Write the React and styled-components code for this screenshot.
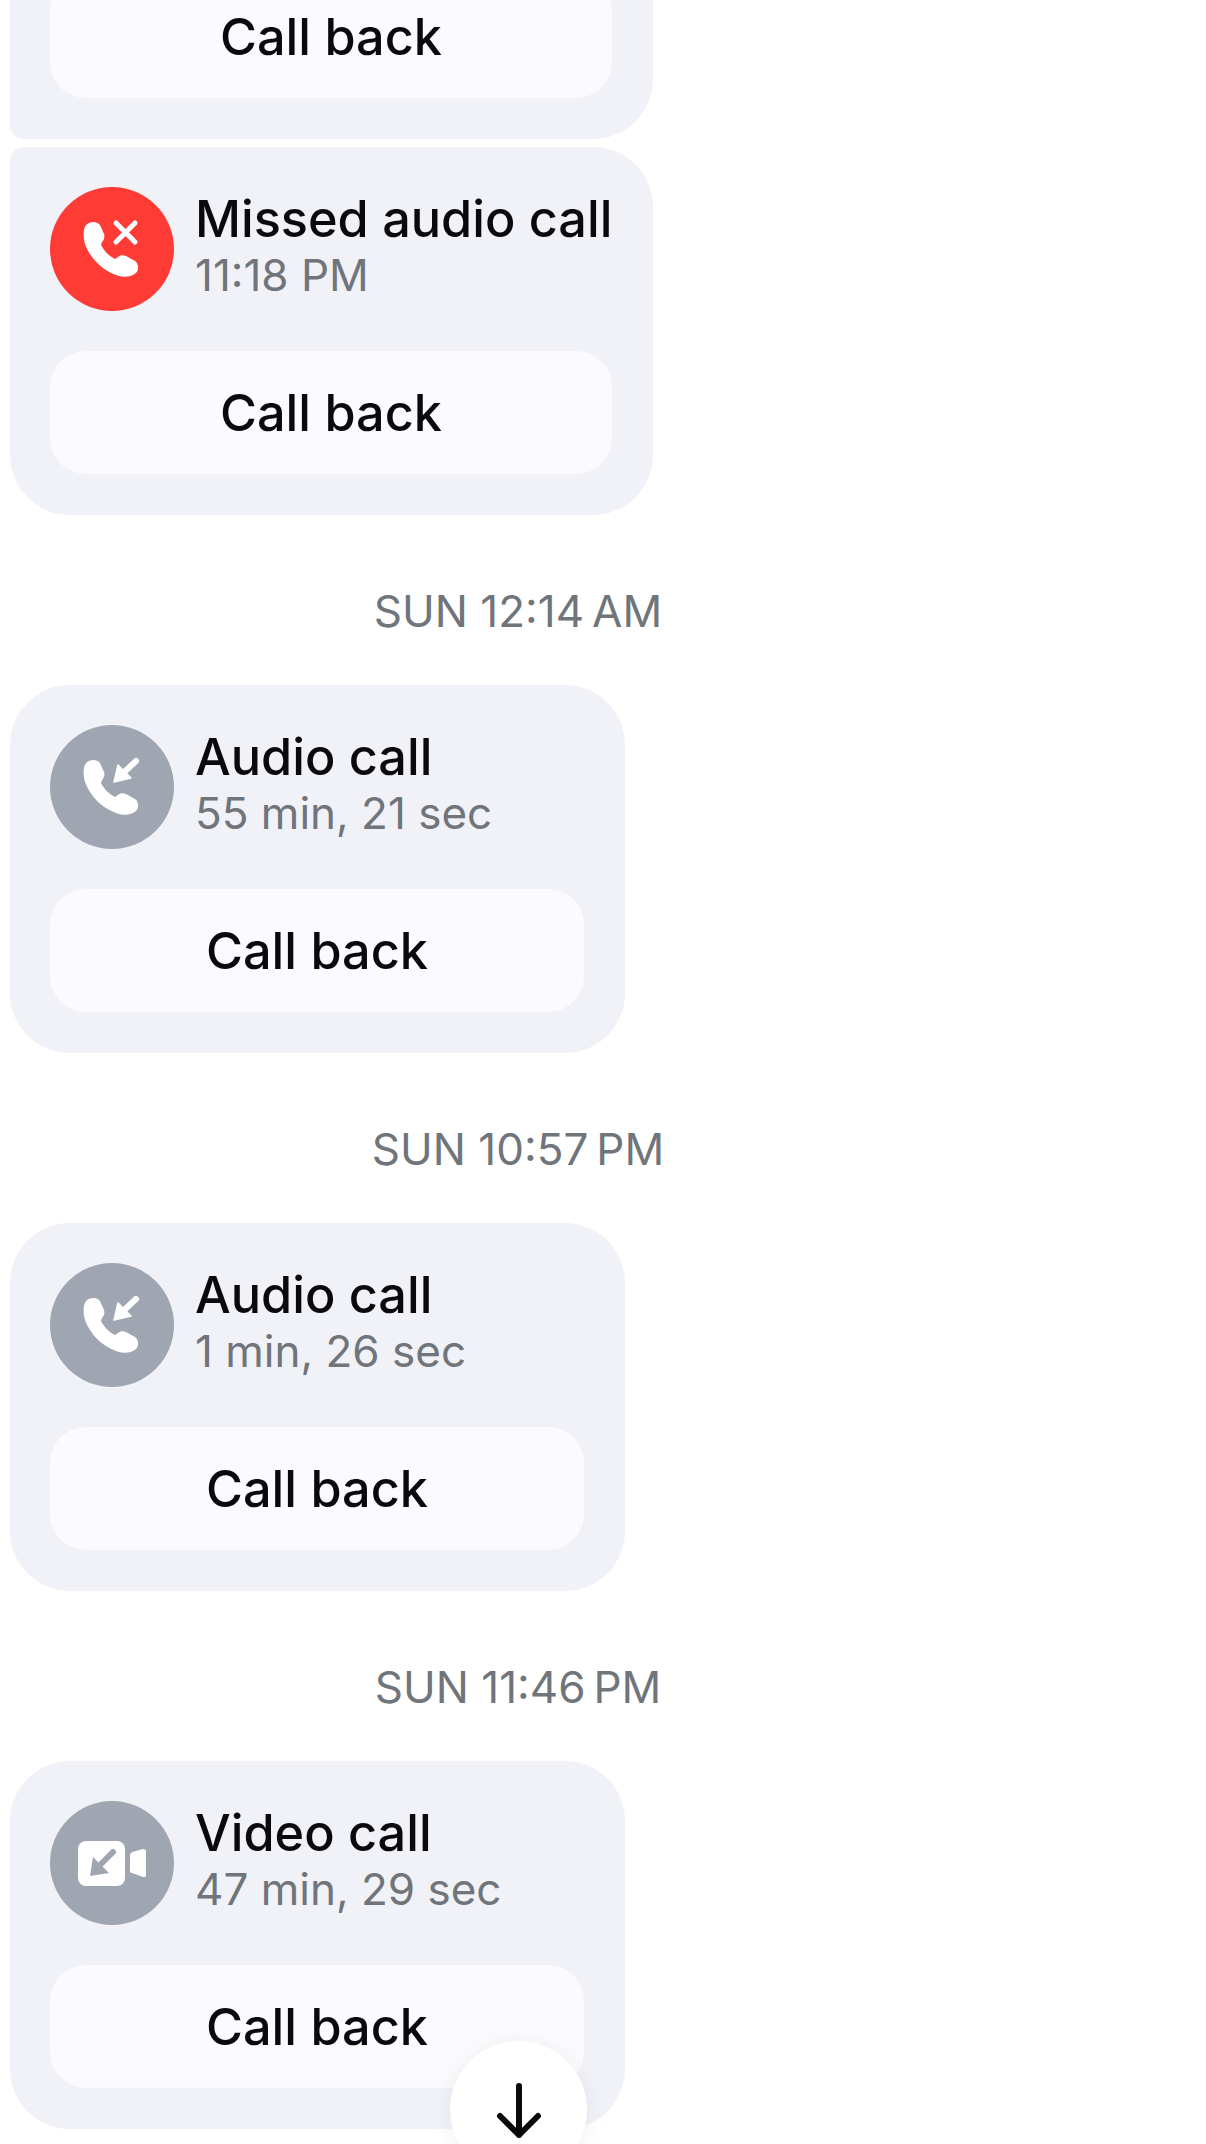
import React from "react";
import styled, { createGlobalStyle } from "styled-components";

const GlobalStyle = createGlobalStyle`
  html, body {
    margin: 0;
    padding: 0;
    background: #ffffff;
  }
  body {
    width: 1206px;
    height: 2144px;
    overflow: hidden;
    font-family: Inter, "Liberation Sans", sans-serif;
  }
`;

const Screen = styled.div`
  position: relative;
  width: 1206px;
  height: 2144px;
  overflow: hidden;
  background: #ffffff;
`;

/* the thread is scrolled, so the first bubble starts above the top edge */
const Thread = styled.div`
  display: flex;
  flex-direction: column;
  align-items: flex-start;
  padding-left: 10px;
  margin-top: -65px;
`;

const Bubble = styled.div`
  box-sizing: border-box;
  width: ${(props) => (props.$wide ? "643px" : "615px")};
  padding: 40px 41px 41px 40px;
  display: flex;
  flex-direction: column;
  gap: 40px;
  background: #f1f2f7;
  border-radius: ${(props) => props.$radius || "60px"};
  margin-top: ${(props) => (props.$joined ? "8px" : "0")};
`;

const Header = styled.div`
  display: flex;
  align-items: flex-start;
  gap: 21px;
`;

const Avatar = styled.div`
  flex: none;
  width: 124px;
  height: 124px;
  border-radius: 50%;
  background: ${(props) => (props.$missed ? "#ff3b36" : "#9fa5b1")};

  svg {
    display: block;
  }
`;

const Texts = styled.div`
  padding-top: 4px;
  white-space: nowrap;
`;

const Title = styled.div`
  font-size: 50.4px;
  line-height: 56px;
  font-weight: 550;
  color: #0a0a0c;
`;

const Subtitle = styled.div`
  font-size: 44px;
  line-height: 56px;
  font-weight: 400;
  color: #70747b;
`;

const CallBack = styled.div`
  height: 123px;
  border-radius: 36px;
  background: #fbfbfd;
  display: flex;
  align-items: center;
  justify-content: center;
  font-size: 50.4px;
  font-weight: 550;
  color: #0a0a0c;
`;

const DateLabel = styled.div`
  box-sizing: border-box;
  width: 1016px;
  height: 170px;
  padding-top: 21px;
  display: flex;
  align-items: center;
  justify-content: center;
  font-size: 44px;
  font-weight: 400;
  color: #70747b;
`;

const ScrollDown = styled.div`
  position: absolute;
  left: 450px;
  top: 2041px;
  width: 137px;
  height: 137px;
  border-radius: 50%;
  background: #ffffff;
  box-shadow: 0 2px 24px rgba(30, 35, 60, 0.06);
  display: flex;
  justify-content: center;
  padding-top: 42px;
  box-sizing: border-box;
`;

const Handset = () => (
  <path
    fill="#ffffff"
    d="M36 38C40 34 47 34 50 38L54 47C55 50 54 53 52 55L51 58C54 64 59 69 65 72L68 70C70 68 73 68 76 69L85 74C89 77 89 83 86 86C82 90 73 91 66 88C52 83 40 71 35 57C33 50 33 42 36 38Z"
  />
);

const MissedIcon = () => (
  <svg width="124" height="124" viewBox="0 0 124 124">
    <Handset />
    <path
      d="M66 36L85 55M85 36L66 55"
      stroke="#ffffff"
      strokeWidth="5"
      strokeLinecap="round"
      fill="none"
    />
  </svg>
);

const IncomingIcon = () => (
  <svg width="124" height="124" viewBox="0 0 124 124">
    <Handset />
    <path
      d="M70 51L86 36"
      stroke="#ffffff"
      strokeWidth="6"
      strokeLinecap="round"
      fill="none"
    />
    <path
      fill="#ffffff"
      stroke="#ffffff"
      strokeWidth="1.5"
      strokeLinejoin="round"
      d="M64 57L68 40L81 53Z"
    />
  </svg>
);

const VideoIcon = () => (
  <svg width="124" height="124" viewBox="0 0 124 124">
    <rect x="28" y="40" width="47" height="45" rx="8" fill="#ffffff" />
    <path
      fill="#ffffff"
      d="M80 54C80 53 81 52 82 51L93 48C95 48 96 49 96 50V74C96 76 95 76 93 76L82 72C81 72 80 71 80 70Z"
    />
    <path
      d="M47 67L63 51"
      stroke="#9fa5b1"
      strokeWidth="6"
      strokeLinecap="round"
      fill="none"
    />
    <path fill="#9fa5b1" d="M40 75L43 56L59 72Z" />
  </svg>
);

const calls = [
  {
    label: "SUN 12:14\u202fAM",
    title: "Audio call",
    detail: "55 min, 21 sec",
    icon: <IncomingIcon />,
  },
  {
    label: "SUN 10:57\u202fPM",
    title: "Audio call",
    detail: "1 min, 26 sec",
    icon: <IncomingIcon />,
  },
  {
    label: "SUN 11:46\u202fPM",
    title: "Video call",
    detail: "47 min, 29 sec",
    icon: <VideoIcon />,
  },
];

function App() {
  return (
    <Screen>
      <GlobalStyle />
      <Thread>
        <Bubble $wide $radius="60px 60px 60px 14px">
          <CallBack>Call back</CallBack>
        </Bubble>
        <Bubble $wide $joined $radius="14px 60px 60px 60px">
          <Header>
            <Avatar $missed>
              <MissedIcon />
            </Avatar>
            <Texts>
              <Title>Missed audio call</Title>
              <Subtitle>11:18 PM</Subtitle>
            </Texts>
          </Header>
          <CallBack>Call back</CallBack>
        </Bubble>

        {calls.map((call) => (
          <React.Fragment key={call.label}>
            <DateLabel>{call.label}</DateLabel>
            <Bubble>
              <Header>
                <Avatar>{call.icon}</Avatar>
                <Texts>
                  <Title>{call.title}</Title>
                  <Subtitle>{call.detail}</Subtitle>
                </Texts>
              </Header>
              <CallBack>Call back</CallBack>
            </Bubble>
          </React.Fragment>
        ))}
      </Thread>

      <ScrollDown>
        <svg width="46" height="56" viewBox="0 0 46 56">
          <path
            d="M23 3V52M4 33L23 52L42 33"
            stroke="#0a0a0c"
            strokeWidth="6"
            strokeLinecap="round"
            strokeLinejoin="round"
            fill="none"
          />
        </svg>
      </ScrollDown>
    </Screen>
  );
}

export default App;
